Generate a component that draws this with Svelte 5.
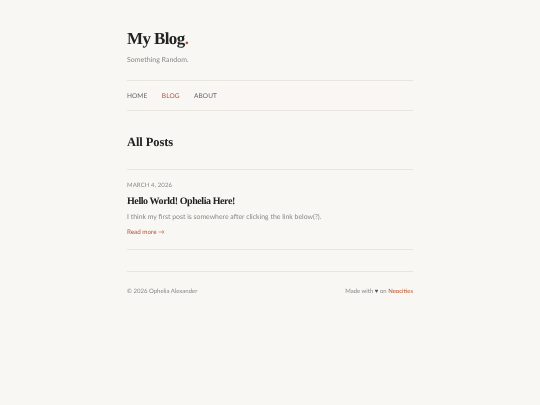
<script>
const posts = [
	{
		date: "March 4, 2026",
		title: "Hello World! Ophelia Here!",
		excerpt: "I think my first post is somewhere after clicking the link below(?).",
	},
];
</script>

<div class="page">
	<header class="site-head">
		<h1>My Blog<span>.</span></h1>
		<p>Something Random.</p>
	</header>

	<nav>
		<a href="#home">Home</a>
		<a href="#blog" class="active">Blog</a>
		<a href="#about">About</a>
	</nav>

	<main>
		<h2>All Posts</h2>
		<div class="posts">
			{#each posts as post}
				<article>
					<time>{post.date}</time>
					<h3>{post.title}</h3>
					<p>{post.excerpt}</p>
					<a href="#post" class="more">Read more →</a>
				</article>
			{/each}
		</div>
	</main>

	<footer>
		<span>© 2026 Ophelia Alexander</span>
		<span>Made with <b>♥</b> on <a href="#neocities">Neocities</a></span>
	</footer>
</div>

<style>
	:global(body) {
		background: #f9f7f4;
		color: #222;
		font-family: "Lato", "Liberation Sans", sans-serif;
		text-rendering: geometricPrecision;
	}

	.page {
		width: 286px;
		margin: 0 auto;
		padding-top: 29px;
		will-change: transform;
	}

	h1,
	h2,
	h3 {
		margin: 0;
		font-family: "Liberation Serif", serif;
		font-weight: 700;
		color: #222;
	}

	a {
		text-decoration: none;
	}

	.site-head {
		padding-bottom: 15px;
	}

	h1 {
		font-size: 17px;
		line-height: 20px;
		letter-spacing: -0.6px;
	}

	h1 span {
		color: #b5532f;
	}

	.site-head p {
		margin: 6px 0 0;
		font-size: 7px;
		line-height: 10px;
		color: #888;
	}

	nav {
		display: flex;
		gap: 14.5px;
		padding: 11px 0 9px;
		border-top: 1px solid #e8e5df;
		border-bottom: 1px solid #e8e5df;
		font-size: 6.5px;
		line-height: 9px;
		letter-spacing: 0.1px;
		text-transform: uppercase;
	}

	nav a {
		color: #666;
	}

	nav a.active {
		color: #b5532f;
	}

	h2 {
		margin-top: 24px;
		font-size: 12.5px;
		line-height: 15px;
		letter-spacing: -0.1px;
	}

	.posts {
		margin-top: 19px;
		border-top: 1px solid #e8e5df;
	}

	article {
		padding: 12px 0;
		border-bottom: 1px solid #e8e5df;
	}

	time {
		display: block;
		font-size: 6px;
		line-height: 8px;
		letter-spacing: 0.1px;
		text-transform: uppercase;
		color: #888;
	}

	h3 {
		margin-top: 5px;
		font-size: 10px;
		line-height: 13px;
		letter-spacing: -0.42px;
	}

	article p {
		margin: 4px 0 0;
		font-size: 6.9px;
		line-height: 11px;
		color: #888;
	}

	.more {
		display: block;
		margin-top: 5px;
		font-size: 6.3px;
		line-height: 9px;
		color: #b5532f;
	}

	footer {
		display: flex;
		justify-content: space-between;
		margin-top: 21px;
		padding-top: 15px;
		border-top: 1px solid #e8e5df;
		font-size: 6px;
		line-height: 9px;
		color: #888;
	}

	footer b {
		font-weight: 400;
		color: #555;
	}

	footer a {
		color: #b5532f;
	}
</style>
